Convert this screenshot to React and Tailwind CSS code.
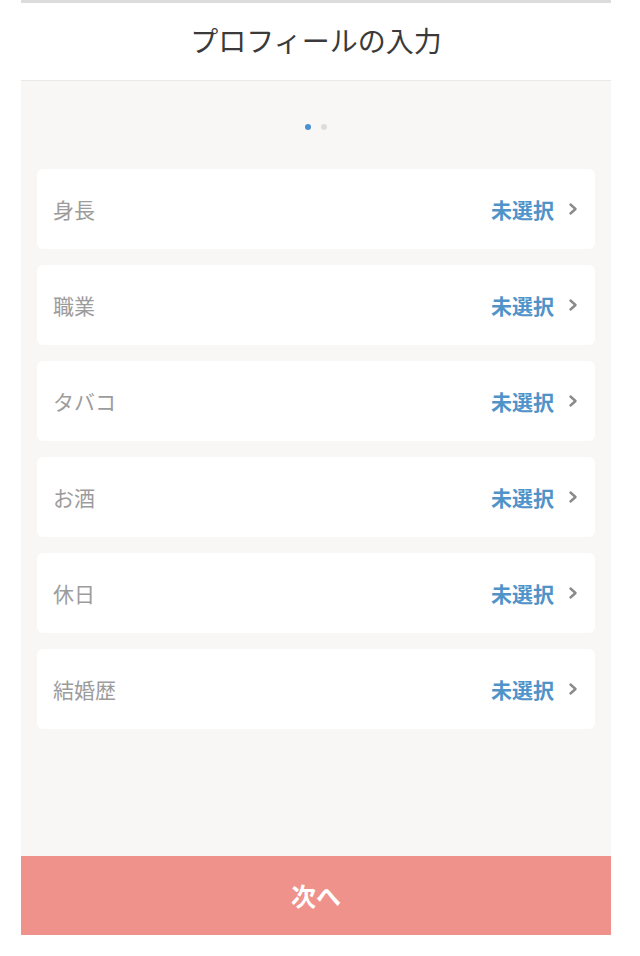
import React from "react";

const items = ["身長", "職業", "タバコ", "お酒", "休日", "結婚歴"];

function Chevron() {
  return (
    <svg width="12" height="14" viewBox="0 0 12 14" fill="none">
      <path d="M3.5 2.5 L8.5 7 L3.5 11.5" stroke="#8a8a8a" strokeWidth="2.4" strokeLinecap="round" strokeLinejoin="round" />
    </svg>
  );
}

export default function App() {
  return (
    <div className="w-[640px] h-[956px] bg-white" style={{ fontFamily: '"Noto Sans CJK JP", "Noto Sans", sans-serif' }}>
      <div className="mx-[21px] w-[590px] flex flex-col">
        <div className="h-[3px] bg-[#dcdcdc]" />
        <div className="h-[78px] bg-white border-b border-[#e9e9e9] flex items-center justify-center relative overflow-hidden">
          <span className="text-[28px] text-[#3a3a3a] leading-none -mt-[3px]">プロフィールの入力</span>
        </div>
        <div className="h-[775px] bg-[#f8f7f6] flex flex-col">
          <div className="flex justify-center gap-[10px] pt-[43px] pb-[39px]">
            <span className="w-[6px] h-[6px] rounded-full bg-[#4a90d2]" />
            <span className="w-[6px] h-[6px] rounded-full bg-[#dcdcdc]" />
          </div>
          <div className="flex flex-col gap-[16px] px-[16px]">
            {items.map((label) => (
              <div key={label} className="h-[80px] bg-white rounded-[6px] flex items-center justify-between pl-[16px] pr-[16px]">
                <span className="text-[21px] text-[#9c9c9c] leading-none">{label}</span>
                <div className="flex items-center gap-[13px]">
                  <span className="text-[21px] font-bold text-[#4f93c9] leading-none">未選択</span>
                  <Chevron />
                </div>
              </div>
            ))}
          </div>
        </div>
        <div className="h-[79px] bg-[#f0928c] flex items-center justify-center">
          <span className="text-[25px] font-bold text-white leading-none">次へ</span>
        </div>
      </div>
    </div>
  );
}
